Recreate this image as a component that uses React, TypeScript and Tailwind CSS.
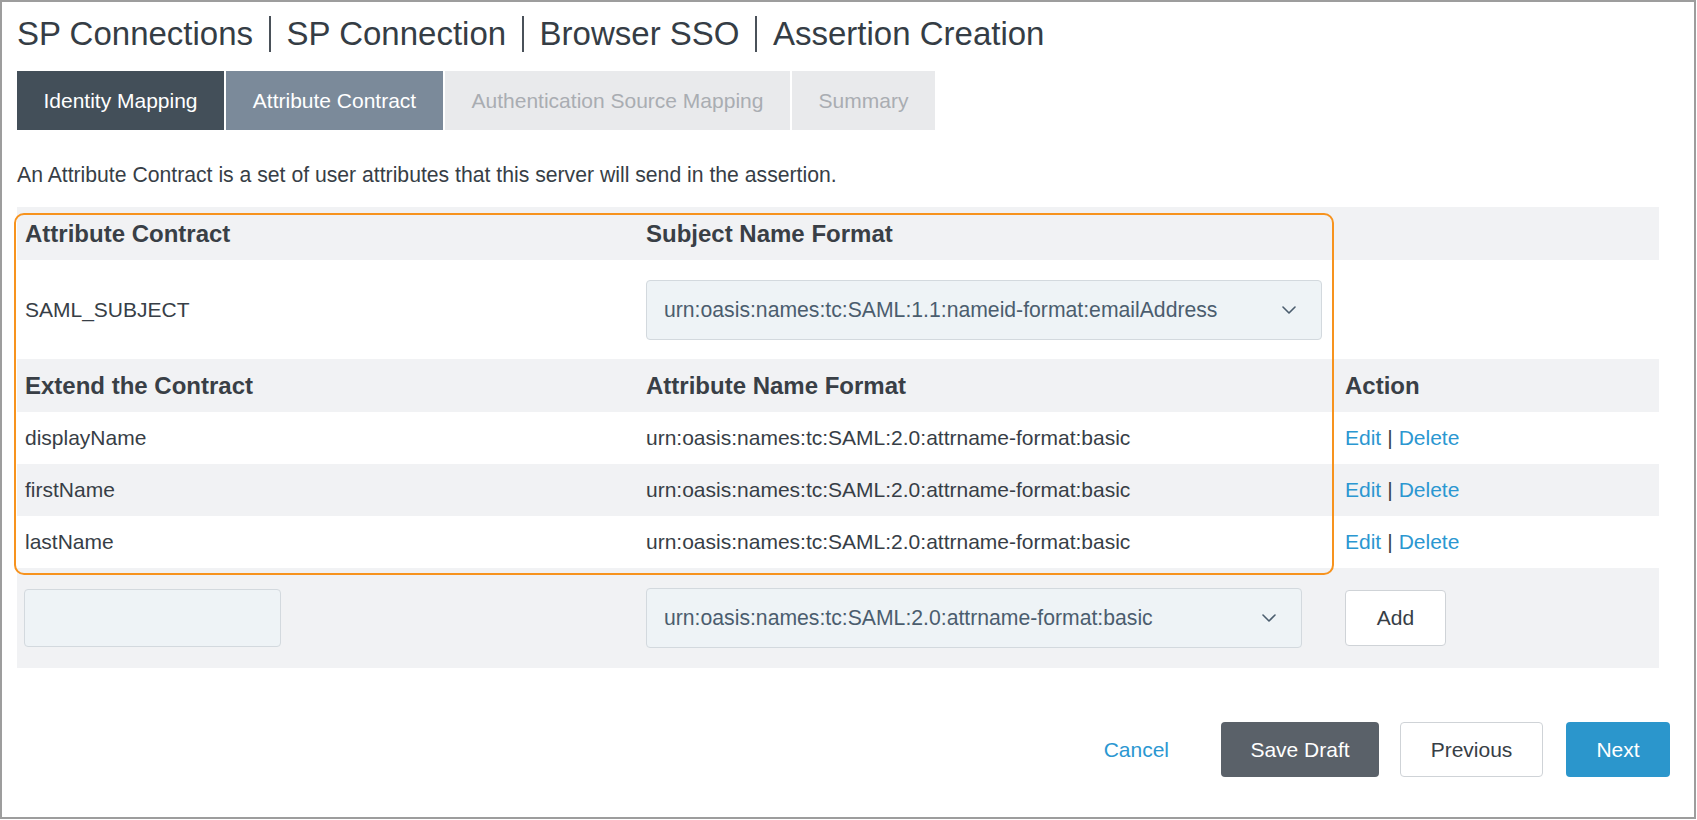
import React from 'react';

const font = { fontFamily: '"Liberation Sans", Arial, sans-serif' };

const attributes = ['displayName', 'firstName', 'lastName'];
const basicFormat = 'urn:oasis:names:tc:SAML:2.0:attrname-format:basic';

function Chevron() {
  return (
    <svg width="14" height="8" viewBox="0 0 14 8" fill="none" className="shrink-0">
      <path d="M1 1l6 6 6-6" stroke="#4b5d6e" strokeWidth="1.6" strokeLinecap="round" strokeLinejoin="round" />
    </svg>
  );
}

function Select({ value, width }: { value: string; width: string }) {
  return (
    <div
      className={`${width} h-[60px] flex items-center justify-between pl-[17px] pr-[25px] bg-[#eef3f6] border border-[#d3d9de] rounded-[4px] text-[21.2px] text-[#4b5d6e]`}
    >
      <span>{value}</span>
      <Chevron />
    </div>
  );
}

export default function App() {
  const tabs = [
    { label: 'Identity Mapping', cls: 'w-[207px] bg-[#434f59] text-white' },
    { label: 'Attribute Contract', cls: 'w-[217px] bg-[#7b8a9a] text-white' },
    { label: 'Authentication Source Mapping', cls: 'w-[345px] bg-[#e9eaec] text-[#a9adb2]' },
    { label: 'Summary', cls: 'w-[143px] bg-[#e9eaec] text-[#a9adb2]' },
  ];
  const titles = ['SP Connections', 'SP Connection', 'Browser SSO', 'Assertion Creation'];

  return (
    <div className="w-[1697px] h-[820px] bg-white text-[21px] text-[#373e46]" style={font}>
      <div className="w-[1696px] h-[819px] border-2 border-[#9d9d9d] flex flex-col pl-[15px] pr-[24px]">
        {/* Title */}
        <h1 className="flex items-center h-[40px] mt-[12px] text-[33px] text-[#353d45]">
          {titles.map((t, i) => (
            <React.Fragment key={t}>
              {i > 0 && <span className="mx-[16px] w-[1.5px] h-[36px] bg-[#4a5159]" />}
              <span>{t}</span>
            </React.Fragment>
          ))}
        </h1>

        {/* Tabs */}
        <div className="flex gap-[2px] mt-[17px] h-[59px]">
          {tabs.map((t) => (
            <div key={t.label} className={`flex items-center justify-center ${t.cls}`}>
              {t.label}
            </div>
          ))}
        </div>

        <p className="mt-[33px] h-[24px] leading-[24px] text-[21.2px]">
          An Attribute Contract is a set of user attributes that this server will send in the assertion.
        </p>

        {/* Table */}
        <div className="relative mt-[20px] w-[1642px]">
          <div className="grid grid-cols-[629px_699px_1fr] h-[53px] items-center bg-[#f1f2f4] font-bold text-[24px] text-[#393f46]">
            <div className="pl-[8px]">Attribute Contract</div>
            <div>Subject Name Format</div>
            <div />
          </div>
          <div className="grid grid-cols-[629px_699px_1fr] h-[99px] items-center bg-white">
            <div className="pl-[8px]">SAML_SUBJECT</div>
            <div>
              <Select value="urn:oasis:names:tc:SAML:1.1:nameid-format:emailAddress" width="w-[676px]" />
            </div>
            <div />
          </div>
          <div className="grid grid-cols-[629px_699px_1fr] h-[53px] items-center bg-[#f1f2f4] font-bold text-[24px] text-[#393f46]">
            <div className="pl-[8px]">Extend the Contract</div>
            <div>Attribute Name Format</div>
            <div>Action</div>
          </div>
          {attributes.map((a, i) => (
            <div
              key={a}
              className={`grid grid-cols-[629px_699px_1fr] h-[52px] items-center ${i % 2 === 1 ? 'bg-[#f1f2f4]' : 'bg-white'}`}
            >
              <div className="pl-[8px]">{a}</div>
              <div>{basicFormat}</div>
              <div className="flex items-center gap-[6px]">
                <span className="text-[#2b97d1]">Edit</span>
                <span className="text-[#3a4048]">|</span>
                <span className="text-[#2b97d1]">Delete</span>
              </div>
            </div>
          ))}
          <div className="grid grid-cols-[629px_699px_1fr] h-[100px] items-center bg-[#f1f2f4]">
            <div className="pl-[7px]">
              <div className="w-[257px] h-[58px] bg-[#eef3f6] border border-[#d3d9de] rounded-[4px]" />
            </div>
            <div>
              <Select value={basicFormat} width="w-[656px]" />
            </div>
            <div>
              <button className="w-[101px] h-[56px] bg-white border border-[#cfd3d7] rounded-[4px] text-[#373e46]">
                Add
              </button>
            </div>
          </div>

          {/* highlight annotation */}
          <div className="absolute left-[-3px] top-[6px] w-[1320px] h-[362px] border-2 border-[#f7931e] rounded-[10px] pointer-events-none" />
        </div>

        {/* Footer */}
        <div className="flex items-center justify-end mt-[54px] h-[55px]">
          <span className="text-[#2b97d1] mr-[52px]">Cancel</span>
          <button className="w-[158px] h-[55px] bg-[#5a6169] text-white rounded-[4px]">Save Draft</button>
          <button className="ml-[21px] w-[143px] h-[55px] bg-white border border-[#cfd3d7] text-[#373e46] rounded-[4px]">
            Previous
          </button>
          <button className="ml-[23px] w-[104px] h-[55px] bg-[#2b96cc] text-white rounded-[4px]">Next</button>
        </div>
      </div>
    </div>
  );
}
